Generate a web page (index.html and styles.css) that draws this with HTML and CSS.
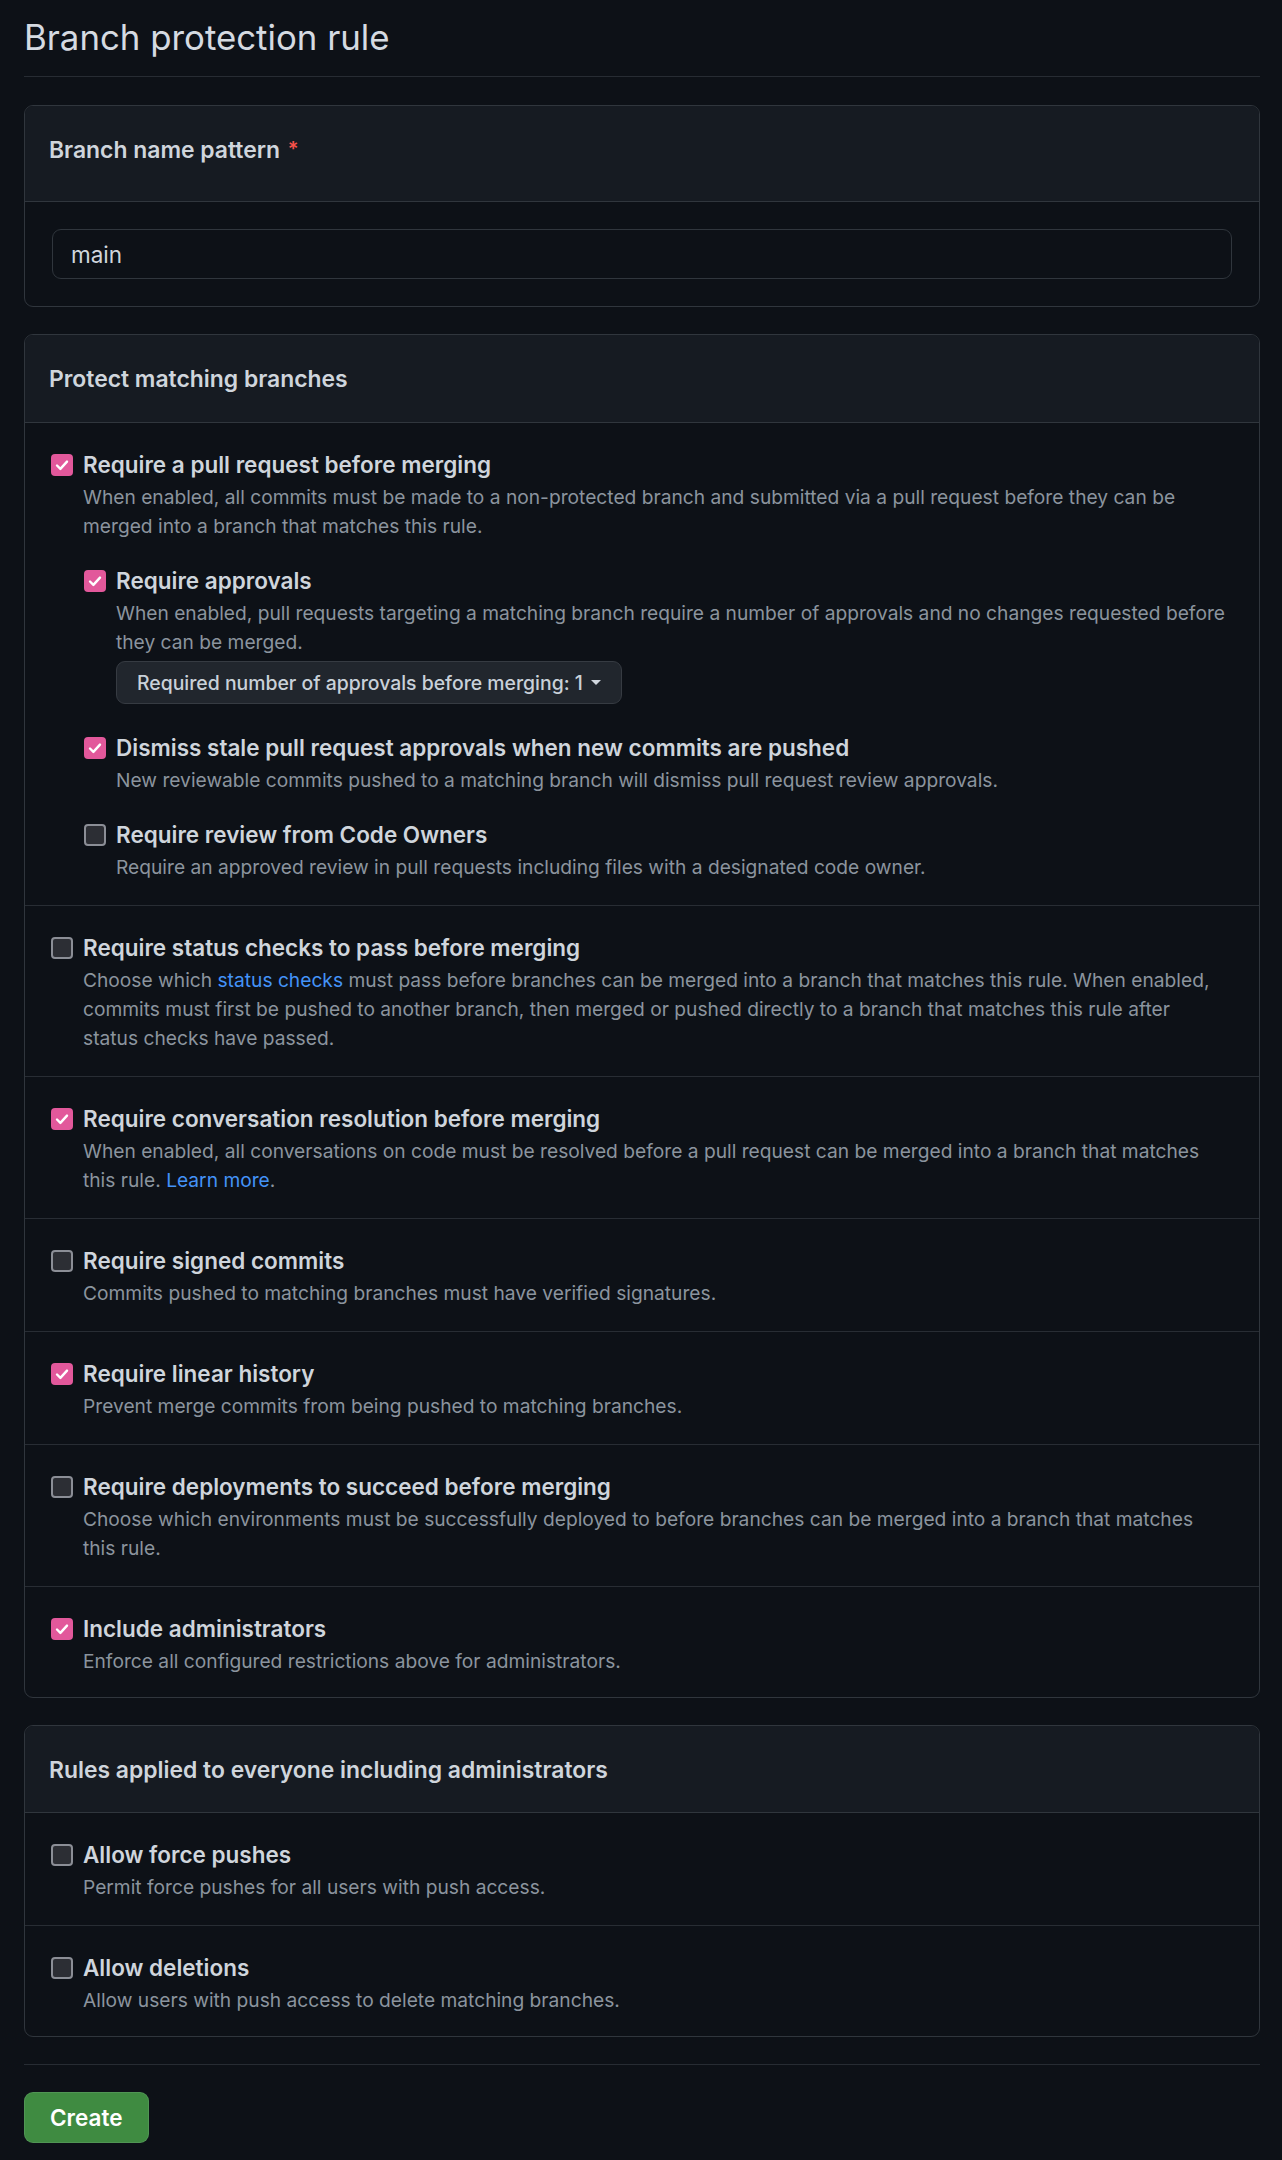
FILE: index.html
```html
<!DOCTYPE html>
<html lang="en">
<head>
<meta charset="utf-8">
<title>Branch protection rule</title>
<link rel="stylesheet" href="styles.css">
</head>
<body>
<div class="page">
  <div class="subhead">
    <h1 class="subhead-title">Branch protection rule</h1>
  </div>

  <section class="box">
    <div class="box-header box-header--tall">
      <span class="box-title">Branch name pattern</span> <span class="req">*</span>
    </div>
    <div class="box-body">
      <div class="input">main</div>
    </div>
  </section>

  <section class="box">
    <div class="box-header"><span class="box-title">Protect matching branches</span></div>

    <div class="row">
      <div class="check">
        <span class="cb on"><svg viewBox="0 0 22 22" width="22" height="22"><path d="M6 11.5l3.4 3.4L16 7.6" fill="none" stroke="#fff" stroke-width="2.4" stroke-linecap="round" stroke-linejoin="round"/></svg></span>
        <div class="check-text">
          <div class="label">Require a pull request before merging</div>
          <div class="note">When enabled, all commits must be made to a non-protected branch and submitted via a pull request before they can be<br>merged into a branch that matches this rule.</div>
          <div class="sub">
            <div class="check">
              <span class="cb on"><svg viewBox="0 0 22 22" width="22" height="22"><path d="M6 11.5l3.4 3.4L16 7.6" fill="none" stroke="#fff" stroke-width="2.4" stroke-linecap="round" stroke-linejoin="round"/></svg></span>
              <div class="check-text">
                <div class="label">Require approvals</div>
                <div class="note">When enabled, pull requests targeting a matching branch require a number of approvals and no changes requested before<br>they can be merged.</div>
                <div class="select">Required number of approvals before merging: 1<span class="caret"></span></div>
              </div>
            </div>
            <div class="check">
              <span class="cb on"><svg viewBox="0 0 22 22" width="22" height="22"><path d="M6 11.5l3.4 3.4L16 7.6" fill="none" stroke="#fff" stroke-width="2.4" stroke-linecap="round" stroke-linejoin="round"/></svg></span>
              <div class="check-text">
                <div class="label">Dismiss stale pull request approvals when new commits are pushed</div>
                <div class="note">New reviewable commits pushed to a matching branch will dismiss pull request review approvals.</div>
              </div>
            </div>
            <div class="check">
              <span class="cb off"></span>
              <div class="check-text">
                <div class="label">Require review from Code Owners</div>
                <div class="note">Require an approved review in pull requests including files with a designated code owner.</div>
              </div>
            </div>
          </div>
        </div>
      </div>
    </div>

    <div class="row">
      <div class="check">
        <span class="cb off"></span>
        <div class="check-text">
          <div class="label">Require status checks to pass before merging</div>
          <div class="note">Choose which <a class="link" href="#">status checks</a> must pass before branches can be merged into a branch that matches this rule. When enabled,<br>commits must first be pushed to another branch, then merged or pushed directly to a branch that matches this rule after<br>status checks have passed.</div>
        </div>
      </div>
    </div>

    <div class="row">
      <div class="check">
        <span class="cb on"><svg viewBox="0 0 22 22" width="22" height="22"><path d="M6 11.5l3.4 3.4L16 7.6" fill="none" stroke="#fff" stroke-width="2.4" stroke-linecap="round" stroke-linejoin="round"/></svg></span>
        <div class="check-text">
          <div class="label">Require conversation resolution before merging</div>
          <div class="note">When enabled, all conversations on code must be resolved before a pull request can be merged into a branch that matches<br>this rule. <a class="link" href="#">Learn more</a>.</div>
        </div>
      </div>
    </div>

    <div class="row">
      <div class="check">
        <span class="cb off"></span>
        <div class="check-text">
          <div class="label">Require signed commits</div>
          <div class="note">Commits pushed to matching branches must have verified signatures.</div>
        </div>
      </div>
    </div>

    <div class="row">
      <div class="check">
        <span class="cb on"><svg viewBox="0 0 22 22" width="22" height="22"><path d="M6 11.5l3.4 3.4L16 7.6" fill="none" stroke="#fff" stroke-width="2.4" stroke-linecap="round" stroke-linejoin="round"/></svg></span>
        <div class="check-text">
          <div class="label">Require linear history</div>
          <div class="note">Prevent merge commits from being pushed to matching branches.</div>
        </div>
      </div>
    </div>

    <div class="row">
      <div class="check">
        <span class="cb off"></span>
        <div class="check-text">
          <div class="label">Require deployments to succeed before merging</div>
          <div class="note">Choose which environments must be successfully deployed to before branches can be merged into a branch that matches<br>this rule.</div>
        </div>
      </div>
    </div>

    <div class="row">
      <div class="check">
        <span class="cb on"><svg viewBox="0 0 22 22" width="22" height="22"><path d="M6 11.5l3.4 3.4L16 7.6" fill="none" stroke="#fff" stroke-width="2.4" stroke-linecap="round" stroke-linejoin="round"/></svg></span>
        <div class="check-text">
          <div class="label">Include administrators</div>
          <div class="note">Enforce all configured restrictions above for administrators.</div>
        </div>
      </div>
    </div>
  </section>

  <section class="box">
    <div class="box-header box-header--short"><span class="box-title">Rules applied to everyone including administrators</span></div>
    <div class="row">
      <div class="check">
        <span class="cb off"></span>
        <div class="check-text">
          <div class="label">Allow force pushes</div>
          <div class="note">Permit force pushes for all users with push access.</div>
        </div>
      </div>
    </div>
    <div class="row">
      <div class="check">
        <span class="cb off"></span>
        <div class="check-text">
          <div class="label">Allow deletions</div>
          <div class="note">Allow users with push access to delete matching branches.</div>
        </div>
      </div>
    </div>
  </section>

  <div class="actions">
    <button class="btn-primary" type="button">Create</button>
  </div>
</div>
</body>
</html>
```

FILE: styles.css
```css
* { box-sizing: border-box; }

body {
  margin: 0;
  background: #0d1117;
  color: #c9d1d9;
  font-family: Inter, "Noto Sans", "Liberation Sans", sans-serif;
}

.page {
  padding: 0 22px 18px 24px;
}

.subhead {
  padding: 10px 0 12px;
  border-bottom: 1px solid #272c33;
}

.subhead-title {
  margin: 0;
  font-size: 34.8px;
  font-weight: 400;
  line-height: 54px;
  color: #d5dae1;
}

.box {
  margin-top: 28px;
  border: 1px solid #30363d;
  border-radius: 9px;
  overflow: hidden;
}

.box + .box {
  margin-top: 27px;
}

.box-header {
  background: #161b22;
  border-bottom: 1px solid #30363d;
  padding: 28px 24px 27px;
  line-height: 32px;
  font-size: 22.9px;
  font-weight: 600;
  color: #cfd5dc;
}

.box-header--tall {
  padding-top: 27px;
  padding-bottom: 35px;
}

.box-header--short {
  padding-bottom: 26px;
}

.req {
  color: #f85149;
  font-size: 20px;
  vertical-align: 2px;
  margin-left: 2px;
}

.box-body {
  padding: 27px 27px 27px;
}

.input {
  height: 50px;
  border: 1px solid #30363d;
  border-radius: 9px;
  background: #0d1117;
  padding: 0 18px;
  display: flex;
  align-items: center;
  font-size: 22.5px;
  color: #d0d6dd;
}

.row {
  padding: 24px 24px 23px 26px;
}

.row + .row {
  border-top: 1px solid #282d34;
}

.row:last-child {
  padding-bottom: 21px;
}

.check {
  display: grid;
  grid-template-columns: 22px 1fr;
  column-gap: 10px;
  align-items: start;
}

.cb {
  width: 22px;
  height: 22px;
  margin-top: 7px;
  border-radius: 4px;
  display: block;
}

.cb svg {
  display: block;
}

.cb.on {
  background: #e2589b;
}

.cb.off {
  background: #2c2e34;
  border: 2px solid #8b8e96;
}

.label {
  font-size: 22.5px;
  font-weight: 600;
  line-height: 36px;
  color: #cfd5dc;
}

.note {
  font-size: 19.2px;
  line-height: 29px;
  color: #8b949e;
  white-space: nowrap;
}

.link {
  color: #4493f8;
  text-decoration: none;
}

.sub {
  margin-left: 1px;
}

.sub > .check {
  margin-top: 22px;
}

.select {
  margin: 4px 0;
  height: 43px;
  width: fit-content;
  display: flex;
  align-items: center;
  padding: 0 20px;
  border: 1px solid #363b42;
  border-radius: 9px;
  background: #21262d;
  font-size: 19.4px;
  font-weight: 500;
  color: #c9d1d9;
}

.caret {
  margin-left: 8px;
  width: 0;
  height: 0;
  border-left: 5px solid transparent;
  border-right: 5px solid transparent;
  border-top: 5px solid #d0d6dd;
}

.actions {
  margin-top: 27px;
  padding-top: 27px;
  border-top: 1px solid #272c33;
}

.btn-primary {
  height: 51px;
  padding: 0 25px;
  border: 1px solid rgba(240, 246, 252, 0.1);
  border-radius: 9px;
  background: #3f8b41;
  color: #ffffff;
  font-family: inherit;
  font-size: 22.5px;
  font-weight: 600;
}
```
